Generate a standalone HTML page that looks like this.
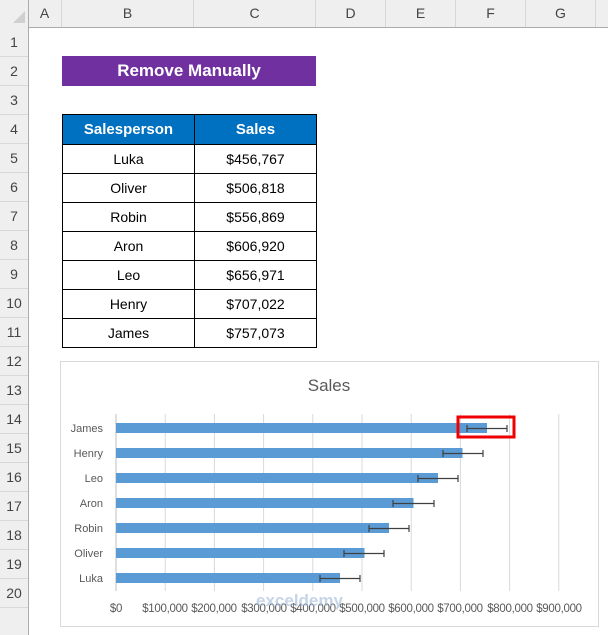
<!DOCTYPE html>
<html><head><style>
body{margin:0;width:608px;height:635px;overflow:hidden;background:#fff;font-family:"Liberation Sans",sans-serif;position:relative}
.a{position:absolute}
.ch{position:absolute;top:0;height:27px;line-height:27px;text-align:center;font-size:14px;color:#444;border-right:1px solid #d8d8d8;box-sizing:border-box}
.rh{position:absolute;left:0;width:28px;height:29px;line-height:29px;text-align:center;font-size:14px;color:#444;border-bottom:1px solid #d8d8d8;box-sizing:border-box}
table{position:absolute;left:62px;top:114px;border-collapse:collapse;font-size:14px}
td{border:1px solid #000;height:28px;padding:0;text-align:center;box-sizing:border-box}
</style></head><body>
<div class="a" style="left:0;top:0;width:608px;height:27px;background:#efefef;border-bottom:1px solid #ababab"></div>
<div class="a" style="left:0;top:0;width:28px;height:635px;background:#efefef;border-right:1px solid #ababab"></div>
<svg class="a" style="left:12px;top:10px" width="14" height="14"><polygon points="13,1 13,13 1,13" fill="#d0d0d0"/></svg>
<div class="ch" style="left:28px;width:34px">A</div>
<div class="ch" style="left:62px;width:132px">B</div>
<div class="ch" style="left:194px;width:122px">C</div>
<div class="ch" style="left:316px;width:70px">D</div>
<div class="ch" style="left:386px;width:70px">E</div>
<div class="ch" style="left:456px;width:70px">F</div>
<div class="ch" style="left:526px;width:70px">G</div>
<div class="rh" style="top:28px">1</div><div class="rh" style="top:57px">2</div><div class="rh" style="top:86px">3</div><div class="rh" style="top:115px">4</div><div class="rh" style="top:144px">5</div><div class="rh" style="top:173px">6</div><div class="rh" style="top:202px">7</div><div class="rh" style="top:231px">8</div><div class="rh" style="top:260px">9</div><div class="rh" style="top:289px">10</div><div class="rh" style="top:318px">11</div><div class="rh" style="top:347px">12</div><div class="rh" style="top:376px">13</div><div class="rh" style="top:405px">14</div><div class="rh" style="top:434px">15</div><div class="rh" style="top:463px">16</div><div class="rh" style="top:492px">17</div><div class="rh" style="top:521px">18</div><div class="rh" style="top:550px">19</div><div class="rh" style="top:579px">20</div>
<div class="a" style="left:62px;top:56px;width:254px;height:30px;background:#7030a0;color:#fff;font-weight:bold;font-size:17px;line-height:30px;text-align:center">Remove Manually</div>
<table>
<tr><td style="width:132px;background:#0070c0;color:#fff;font-weight:bold;font-size:15px;height:30px">Salesperson</td><td style="width:122px;background:#0070c0;color:#fff;font-weight:bold;font-size:15px">Sales</td></tr>
<tr><td style="height:29px">Luka</td><td>$456,767</td></tr>
<tr><td style="height:29px">Oliver</td><td>$506,818</td></tr>
<tr><td style="height:29px">Robin</td><td>$556,869</td></tr>
<tr><td style="height:29px">Aron</td><td>$606,920</td></tr>
<tr><td style="height:29px">Leo</td><td>$656,971</td></tr>
<tr><td style="height:29px">Henry</td><td>$707,022</td></tr>
<tr><td style="height:29px">James</td><td>$757,073</td></tr>
</table>
<svg class="a" style="left:0;top:0" width="608" height="635" font-family="Liberation Sans,sans-serif">
<rect x="60.5" y="361.5" width="538" height="265" fill="#fff" stroke="#d9d9d9"/>
<text x="329" y="391" font-size="17" fill="#595959" text-anchor="middle">Sales</text>
<g stroke="#d9d9d9">
<line x1="165.2" y1="414" x2="165.2" y2="591"/><line x1="214.4" y1="414" x2="214.4" y2="591"/><line x1="263.6" y1="414" x2="263.6" y2="591"/><line x1="312.8" y1="414" x2="312.8" y2="591"/><line x1="362" y1="414" x2="362" y2="591"/><line x1="411.2" y1="414" x2="411.2" y2="591"/><line x1="460.4" y1="414" x2="460.4" y2="591"/><line x1="509.6" y1="414" x2="509.6" y2="591"/><line x1="558.8" y1="414" x2="558.8" y2="591"/>
</g>
<line x1="116" y1="414" x2="116" y2="591" stroke="#bfbfbf"/>
<g fill="#5b9bd5">
<rect x="116" y="423" width="371" height="10"/>
<rect x="116" y="448" width="346.5" height="10"/>
<rect x="116" y="473" width="322" height="10"/>
<rect x="116" y="498" width="297.5" height="10"/>
<rect x="116" y="523" width="273" height="10"/>
<rect x="116" y="548" width="248.5" height="10"/>
<rect x="116" y="573" width="224" height="10"/>
</g>
<g stroke="#404040" stroke-width="1.2" fill="none">
<path d="M467 428.5H507M467 425v7M507 425v7"/>
<path d="M443 453.5H483M443 450v7M483 450v7"/>
<path d="M418 478.5H458M418 475v7M458 475v7"/>
<path d="M393 503.5H434M393 500v7M434 500v7"/>
<path d="M369 528.5H409M369 525v7M409 525v7"/>
<path d="M344 553.5H384M344 550v7M384 550v7"/>
<path d="M320 578.5H360M320 575v7M360 575v7"/>
</g>
<rect x="458" y="417" width="56" height="20" fill="none" stroke="#e00" stroke-width="3"/>
<g font-size="11" fill="#595959" text-anchor="end">
<text x="103" y="432">James</text><text x="103" y="457">Henry</text><text x="103" y="482">Leo</text><text x="103" y="507">Aron</text><text x="103" y="532">Robin</text><text x="103" y="557">Oliver</text><text x="103" y="582">Luka</text>
</g>
<g font-size="11.5" fill="#595959" text-anchor="middle" letter-spacing="-0.3">
<text x="116" y="612">$0</text><text x="165" y="612">$100,000</text><text x="214" y="612">$200,000</text><text x="264" y="612">$300,000</text><text x="313" y="612">$400,000</text><text x="362" y="612">$500,000</text><text x="411" y="612">$600,000</text><text x="460" y="612">$700,000</text><text x="510" y="612">$800,000</text><text x="559" y="612">$900,000</text>
</g>
<text x="256" y="606" font-size="17" font-weight="bold" fill="#9fb8d8" opacity="0.6">exceldemy</text>
</svg>
</body></html>
